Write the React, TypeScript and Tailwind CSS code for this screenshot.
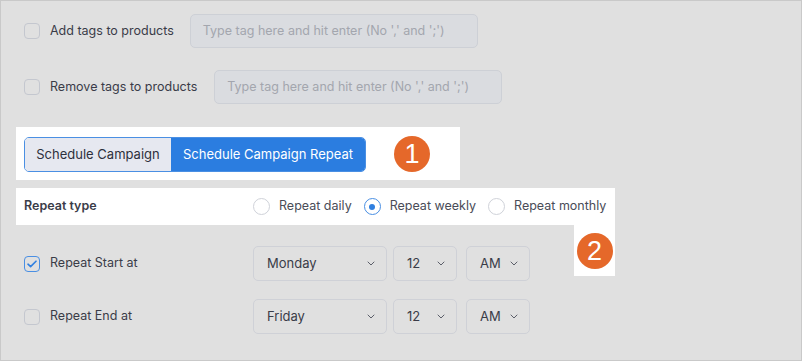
import { useState } from 'react'

type CheckProps = { checked?: boolean }

function Check({ checked = false }: CheckProps) {
  return (
    <span
      className={`flex h-4 w-4 shrink-0 items-center justify-center rounded-[4px] border-[1.5px] ${
        checked ? 'border-[#4a8fe3]' : 'border-[#c4c7cf]'
      }`}
    >
      {checked && (
        <svg width="10" height="8" viewBox="0 0 10 8" fill="none">
          <path d="M1 4.2L3.6 6.6L9 1.2" stroke="#2f7fe0" strokeWidth="1.6" strokeLinecap="round" strokeLinejoin="round" />
        </svg>
      )}
    </span>
  )
}

function Radio({ checked = false }: CheckProps) {
  return (
    <span
      className={`flex h-[17px] w-[17px] shrink-0 items-center justify-center rounded-full border ${
        checked ? 'border-[#4a8fe3]' : 'border-[#cfd2d9]'
      }`}
    >
      {checked && <span className="h-[6px] w-[6px] rounded-full bg-[#2f7fe0]" />}
    </span>
  )
}

function Chevron() {
  return (
    <svg width="8" height="5" viewBox="0 0 8 5" fill="none">
      <path d="M1 1l3 3 3-3" stroke="#5c5f6a" strokeWidth="1" strokeLinecap="round" strokeLinejoin="round" />
    </svg>
  )
}

function Select({ value, width }: { value: string; width: string }) {
  return (
    <div
      className={`flex h-[35px] ${width} items-center justify-between rounded-[5px] border border-[#cfd1d7] pl-[13px] pr-[11px] text-[13px] text-[#3a3c48]`}
    >
      <span>{value}</span>
      <Chevron />
    </div>
  )
}

function Badge({ n }: { n: string }) {
  return (
    <span className="flex h-[36px] w-[36px] items-center justify-center rounded-full bg-[#e5682a] font-['Liberation_Sans',sans-serif] text-[27px] leading-none text-white">
      {n}
    </span>
  )
}

export default function App() {
  const [repeat, setRepeat] = useState('weekly')

  return (
    <div className="h-[361px] w-[802px] overflow-hidden border border-[#c9c9c9] bg-[#e0e0e0] pl-[15px] pt-[13px] font-['Inter',sans-serif] text-[12.5px] text-[#3a3c48]">
      {/* Tag rows */}
      <div className="flex h-[34px] items-center pl-2">
        <Check />
        <span className="ml-[10px] whitespace-nowrap">Add tags to products</span>
        <div className="ml-[16px] flex h-[34px] w-[288px] items-center whitespace-nowrap rounded-[5px] border border-[#cdd0d6] bg-[#dadce0] pl-[12px] text-[#a3a6ae]">
          Type tag here and hit enter (No ',' and ';')
        </div>
      </div>
      <div className="mt-[22px] flex h-[34px] items-center pl-2">
        <Check />
        <span className="ml-[10px] whitespace-nowrap">Remove tags to products</span>
        <div className="ml-[17px] flex h-[34px] w-[288px] items-center whitespace-nowrap rounded-[5px] border border-[#cdd0d6] bg-[#dadce0] pl-[12px] text-[#a3a6ae]">
          Type tag here and hit enter (No ',' and ';')
        </div>
      </div>

      {/* Schedule mode */}
      <div className="mt-[23px] flex h-[53px] w-[444px] items-start bg-white pl-2 pt-[10px]">
        <div className="flex h-[35px] overflow-hidden rounded-[5px] border border-[#4a8fe3] text-[13px]">
          <span className="flex w-[146px] items-center justify-center bg-[#e6e8f0] text-[#2e303c]">Schedule Campaign</span>
          <span className="flex w-[194px] items-center justify-center bg-[#2b7de0] text-white">Schedule Campaign Repeat</span>
        </div>
        <div className="ml-[28px] -mt-px">
          <Badge n="1" />
        </div>
      </div>

      {/* Repeat type */}
      <div className="relative mt-[8px] flex h-[37px] w-[599px] items-center bg-white pl-2">
        <span className="w-[229px] shrink-0 font-semibold text-[#3a3c48]">Repeat type</span>
        {[
          ['daily', 'Repeat daily'],
          ['weekly', 'Repeat weekly'],
          ['monthly', 'Repeat monthly'],
        ].map(([k, label], i) => (
          <button
            key={k}
            type="button"
            onClick={() => setRepeat(k)}
            className={`flex shrink-0 items-center gap-[9px] whitespace-nowrap text-[12.5px] text-[#4a4c58] ${i > 0 ? 'ml-[12px]' : ''}`}
          >
            <Radio checked={repeat === k} />
            <span>{label}</span>
          </button>
        ))}
        <div className="absolute right-0 top-full flex h-[51px] w-[41px] items-start justify-center bg-white pt-[8px]">
          <Badge n="2" />
        </div>
      </div>

      {/* Start / end */}
      <div className="mt-[21px] flex items-center pl-2">
        <div className="flex w-[229px] items-center">
          <Check checked />
          <span className="ml-[10px]">Repeat Start at</span>
        </div>
        <Select value="Monday" width="w-[134px]" />
        <div className="ml-[6px]">
          <Select value="12" width="w-[64px]" />
        </div>
        <div className="ml-[9px]">
          <Select value="AM" width="w-[64px]" />
        </div>
      </div>
      <div className="mt-[18px] flex items-center pl-2">
        <div className="flex w-[229px] items-center">
          <Check />
          <span className="ml-[10px]">Repeat End at</span>
        </div>
        <Select value="Friday" width="w-[134px]" />
        <div className="ml-[6px]">
          <Select value="12" width="w-[64px]" />
        </div>
        <div className="ml-[9px]">
          <Select value="AM" width="w-[64px]" />
        </div>
      </div>
    </div>
  )
}
